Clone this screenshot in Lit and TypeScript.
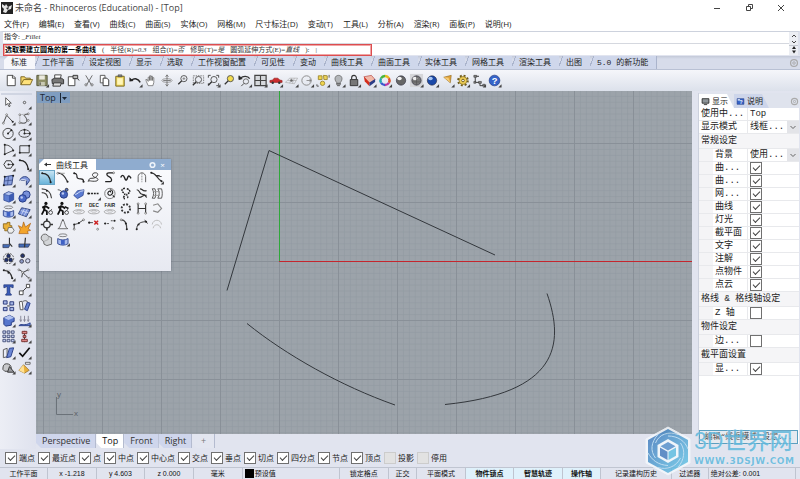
import { LitElement, html, css, svg, nothing, type SVGTemplateResult } from "lit";
import { customElement, property } from "lit/decorators.js";
import { classMap } from "lit/directives/class-map.js";
import { styleMap } from "lit/directives/style-map.js";

type Pic = SVGTemplateResult;

const flyout = svg`<path d="M15.500 12v3.500H12z" fill="#444" stroke="none"/>`;
const node = (x: number, y: number): Pic =>
  svg`<circle cx=${x} cy=${y} r="1" fill="#fff" stroke="#444" stroke-width=".6"/>`;
const dot = (x: number, y: number, c = "#222"): Pic =>
  svg`<circle cx=${x} cy=${y} r="1.1" fill=${c} stroke="none"/>`;
const ball = (c: string, hi: string): Pic => svg`
  <circle cx="8" cy="8" r="5" fill=${c} stroke="#223" stroke-width=".6"/>
  <ellipse cx="6.4" cy="5.8" rx="2.4" ry="1.8" fill=${hi} stroke="none"/>`;
const disc = (t: string): Pic => svg`
  <ellipse cx="8" cy="11.5" rx="6" ry="2.2" stroke="#999" stroke-width=".8"/>
  <ellipse cx="8" cy="11" rx="3" ry="1" stroke="#aaa" stroke-width=".7"/>
  <text x="8" y="6.5" font-size="5" font-weight="700" text-anchor="middle" font-family="Liberation Sans, sans-serif" fill="#222" stroke="none">${t}</text>`;
const walker = svg`
  <circle cx="7" cy="2.6" r="1.7" fill="#111" stroke="none"/>
  <path d="M6.5 4.5L5 9l3 2v4M5.4 9L2.5 14.5M6.5 5.5L3 7M7 5.5l3.5 2.5" stroke="#111" stroke-width="1.9"/>
  <circle cx="12" cy="12.3" r="2" stroke="#222" stroke-width=".8"/><path d="M9.5 12.5L13.5 8.5" stroke="#444" stroke-width=".8"/>`;
const glass = (x: number, y: number, fill = "none"): Pic => svg`
  <circle cx=${x} cy=${y} r="3.3" fill=${fill} stroke="#555"/>
  <path d="M${x - 2.4} ${y + 2.4}L${x - 6} ${y + 6}" stroke="#333" stroke-width="1.5"/>`;

const ICONS: Record<string, Pic> = {
  // standard toolbar
  new: svg`<path d="M4 2.5h6L12.500 5v8.500H4z" fill="#fff" stroke="#444"/><path d="M9.500 2.500V5.500h3" stroke="#444"/>`,
  open: svg`<path d="M2 12.500V4h4l1 1.500h5V7" fill="#f5d76a" stroke="#7b6420"/><path d="M2 12.500L5 7h9.500L12 12.500z" fill="#ffe27a" stroke="#7b6420"/>`,
  save: svg`<path d="M2.500 2.500h11v11h-11z" fill="#8d8e66" stroke="#55563c"/><path d="M5 2.500h6V7H5z" fill="#ebeadf" stroke="none"/><path d="M5 9.500h6v4H5z" fill="#c9c9b4" stroke="none"/><path d="M6 10v3" stroke="#333"/>`,
  print: svg`<path d="M5 6V2h7l-1 4" fill="#fff" stroke="#444"/><path d="M2 7l3-1.500h7L14.500 7v4.500h-12z" fill="#777" stroke="#333"/><path d="M4 10.500h8L11 14H3z" fill="#ddd" stroke="#333"/>`,
  props: svg`<path d="M3 4h7v9.500H3z" fill="#fff" stroke="#444"/><path d="M8 2.500h5v3.500H8z" fill="#bbb" stroke="#333"/><path d="M13 6l1.500 2" stroke="#333"/>`,
  cut: svg`<path d="M4.500 2.500L10.500 12.500M11.500 2.500L5.500 12.500" stroke="#666"/><circle cx="4.800" cy="12.600" r="1.200" stroke="#777"/><circle cx="11.200" cy="12.600" r="1.200" stroke="#777"/>`,
  copy: svg`<path d="M3.500 2.500h5v8h-5z" fill="#fff" stroke="#555"/><path d="M6.500 5.500h4L12.500 7.500v6h-6z" fill="#fff" stroke="#333"/>`,
  paste: svg`<path d="M3.500 3.500h9v10.500h-9z" fill="#ecd257" stroke="#77681f"/><path d="M5 5.500h6v7H5z" fill="#fff6b8" stroke="none"/><path d="M6 2h4v2H6z" fill="#888" stroke="#444" stroke-width=".7"/>`,
  undo: svg`<path d="M3.500 8C7 5 11 6 13 10" stroke="#222" stroke-width="1.600"/><path d="M1.500 9V4.500L6 8.500z" fill="#222" stroke="none"/>`,
  hand: svg`<path d="M5 13.500L3 9l-.500-2L4 7l1 2V4.500h1.500V8V3H8v5V3.500h1.500V8V5H11v5l-1 3.500z" fill="#fff" stroke="#666" stroke-width=".8"/>`,
  rotate: svg`<ellipse cx="8" cy="8" rx="5.500" ry="2" stroke="#999"/><path d="M8 2v12M6.500 4L8 2l1.500 2M6.500 12L8 14l1.500-2M4 8h8" stroke="#777"/>`,
  zoom: svg`${glass(9.5, 6)}<path d="M9.500 4.500v3M8 6h3" stroke="#777" stroke-width=".8"/>`,
  zoomWin: svg`<path d="M3 3h11v8H3z" stroke="#777" stroke-dasharray="1.500 1"/>${glass(8.5, 7)}`,
  zoomExt: svg`<path d="M2.500 5V2.500H5M11 2.500h2.500V5M13.500 11v2.500H11M2.500 11v2.500" stroke="#444"/>${glass(8.5, 7)}`,
  zoomSel: svg`${glass(9.5, 6, "#f3dc50")}`,
  undoView: svg`<path d="M3 5.500C6 3 11 3 13 6" stroke="#333" stroke-width="1.400"/><path d="M1.500 7V3L5 6z" fill="#222"/><circle cx="9" cy="9" r="2.800" stroke="#666"/><path d="M7 11l-3 3" stroke="#444"/>`,
  views: svg`<path d="M2 2.500h12v11H2z" fill="#d6d9dd" stroke="#444" stroke-width="1.300"/><path d="M8 2.500v11M2 8h12" stroke="#444" stroke-width="1.200"/>`,
  car: svg`<path d="M1.500 10V8l3-.500L6 5.500h4L12 7.500l2.500.500v2z" fill="#cc2d2d" stroke="#8d1717" stroke-width=".6"/><circle cx="4.500" cy="10.300" r="1.300" fill="#333" stroke="none"/><circle cx="11.500" cy="10.300" r="1.300" fill="#333" stroke="none"/>`,
  cplane: svg`<path d="M1.500 10L6 5.500h8.500L11 11.500zM4 8h9M8 5.500L6 11M11 5.500L9 11" stroke="#aaa" stroke-width=".7"/><circle cx="8" cy="8" r="1.300" fill="#666" stroke="none"/>`,
  radius: svg`<circle cx="7.500" cy="8" r="5" stroke="#888"/><path d="M7.500 8h5M10.500 6.500L12.500 8l-2 1.500" stroke="#777" stroke-width=".8"/>`,
  select: svg`<path d="M3 3h4v4H3z" fill="#f0d54d" stroke="#a08c35"/><path d="M8.500 2.500l4 .500v4H9z" fill="#eed45b" stroke="#a08c35"/><circle cx="7.500" cy="11" r="2.300" fill="#f0d54d" stroke="#a08c35"/><path d="M1.500 12v2h2M14.500 2v3" stroke="#555"/>`,
  bulb: svg`<path d="M6 10C3 7 4 2.500 8 2.500S13 7 10 10v2.500H6z" fill="#b4b7ba" stroke="#666" stroke-width=".8"/><path d="M6 11h4M6.500 13.500h3" stroke="#555"/>`,
  lock: svg`<path d="M5.500 7V5a2.500 2.500 0 015 0v2" stroke="#333" stroke-width="1.200"/><path d="M4 7h8v6.500H4z" fill="#777" stroke="#333"/>`,
  layer: svg`<path d="M2 4l8-1.500L14 7l-6 4z" fill="#f1b9a8" stroke="#a33" stroke-width=".6"/><path d="M2 4l6 6v4L3 9z" fill="#d52d1c" stroke="none"/><path d="M8 10l6-3.500v3L8 14z" fill="#2b3d86" stroke="none"/>`,
  wheel: svg`<g stroke-width="2.600"><path d="M8 3.200A4.800 4.800 0 0112.200 5.600" stroke="#e6b91e"/><path d="M12.200 5.600A4.800 4.800 0 0112.200 10.400" stroke="#e0522d"/><path d="M12.200 10.400A4.800 4.800 0 018 12.800" stroke="#b839a3"/><path d="M8 12.800A4.800 4.800 0 013.800 10.400" stroke="#3a58cf"/><path d="M3.800 10.400A4.800 4.800 0 013.800 5.600" stroke="#28a7b3"/><path d="M3.800 5.600A4.800 4.800 0 018 3.200" stroke="#49b53c"/></g>`,
  grey: ball("#666", "#f4f4f4"),
  greyBox: svg`<path d="M1 1h14v14H1z" fill="#d5d6d9" stroke="none"/>${ball("#777", "#eee")}<path d="M8 3v10M3.500 9.500h9" stroke="#555" stroke-width=".7"/>`,
  blue: ball("#1b49a8", "#a8c6f4"),
  cone: svg`<path d="M4 4.500L12 2.500l-1 8z" fill="#e0a33a" stroke="#87601a" stroke-width=".6"/><path d="M4 4.500l5 .500 2 5z" fill="#f6cd78" stroke="none"/>`,
  gear: svg`<circle cx="8" cy="8" r="5" stroke="#6d5a1c" stroke-width="2.400" stroke-dasharray="2 1.930"/><circle cx="8" cy="8" r="4.200" fill="#efcf57" stroke="#8b7426" stroke-width=".8"/><circle cx="8" cy="8" r="1.400" fill="#fff" stroke="#6d5a1c"/>`,
  history: svg`<path d="M4 4v6h5v3.500h4M4 3.500h4" stroke="#333"/><path d="M2.500 2.500h3v2h-3zM7.500 9h3v2h-3zM12 12h2.500v2H12zM2.500 9h2v2h-2z" fill="#888" stroke="#333" stroke-width=".6"/>`,
  help: svg`<circle cx="8" cy="8" r="5.700" fill="#3463c8" stroke="#1b3580" stroke-width=".7"/><text x="8" y="11.600" font-size="10" font-weight="700" text-anchor="middle" font-family="Liberation Sans, sans-serif" fill="#fff" stroke="none">?</text>`,

  // side toolbox
  arrow: svg`<path d="M5 3v8l2-1.800L8.500 12.500l1.300-.700L8.300 8.700H11z" fill="#fff" stroke="#333" stroke-width=".8"/>`,
  point: svg`<circle cx="8" cy="8" r="1.300" stroke="#555"/>`,
  polyline: svg`<path d="M2.500 13L6 4.500l6.500 7" stroke="#444"/>${node(6, 4)}${node(2.5, 13)}${dot(12.5, 11.5)}`,
  ctrlCurve: svg`<path d="M3.500 12.500C9 14 12 12 10 8S5 5 12 3" stroke="#333"/><path d="M3 4l9-1M3 4v8" stroke="#888" stroke-dasharray="1 1"/>${node(3, 4)}${node(12, 3)}${node(3, 12.5)}${node(12, 10)}`,
  circle: svg`<circle cx="7.500" cy="8" r="5.500" stroke="#444"/><path d="M7.500 8l3.500-3.500" stroke="#333"/>${dot(7.5, 8)}${dot(11, 4.5)}`,
  ellipse: svg`<ellipse cx="8" cy="8" rx="6" ry="4" stroke="#444"/><path d="M8 4v4h5" stroke="#666"/>${dot(8, 8)}${dot(8, 4)}${dot(13.5, 8)}`,
  arc: svg`<path d="M4 3v10M4 3c5 0 8 3 9 6L4 13" stroke="#444"/>${dot(4, 3)}${dot(4, 13)}${dot(13, 9)}`,
  rect: svg`<path d="M3 4h10v7.500H3z" stroke="#333"/>${dot(3, 11.5)}${dot(13, 4)}`,
  polygon: svg`<path d="M5.500 4h5L13 8l-2.500 4h-5L3 8z" stroke="#333"/><path d="M8 8h5" stroke="#666"/>${dot(8, 8)}${dot(13, 8)}`,
  fillet: svg`<path d="M3 3.500C8 3.500 11 6 12 13" stroke="#222" stroke-width="1.400"/>${dot(3, 3.5)}${dot(12, 13)}`,
  surface: svg`<path d="M4 4l9-1.500-1.500 10L3 13z" fill="#8ba0de" stroke="#30437f"/><path d="M8 3.500l-1 9M3.500 8.500l9-1" stroke="#30437f" stroke-width=".7"/>${dot(4, 4)}${dot(13, 3)}${dot(3, 13)}`,
  sweep: svg`<path d="M3 8C4 3 12 2 13.500 8L10 13V8z" fill="#7f95da" stroke="#30437f"/><path d="M3 8c2-1 5-1 7 0" stroke="#fff"/>`,
  box: svg`<path d="M3 5.500L8 3l5.500 1.500v7L8.500 14 3 12z" fill="#5e7dd0" stroke="#253b83" stroke-width=".7"/><path d="M3 5.500L8 3l5.500 1.500L8.500 7z" fill="#b5c6f3" stroke="#253b83" stroke-width=".5"/><path d="M8.500 7v7l5-2.500v-7z" fill="#3d5bb3" stroke="none"/>`,
  spheres: svg`<circle cx="10" cy="6" r="4" fill="#7890da" stroke="#253b83"/><circle cx="6" cy="10" r="4" fill="#4b69c5" stroke="#253b83"/><circle cx="5" cy="9" r="1.300" fill="#bccbf5" stroke="none"/>`,
  loft: svg`<path d="M2.500 7c3 2 8 2 11 0v5.500c-3 2-8 2-11 0z" fill="#a9bbec" stroke="#334a91"/><path d="M6 8.500h4v5H6z" fill="#3f61c4" stroke="none"/><ellipse cx="8" cy="3.500" rx="4.500" ry="1.500" stroke="#666" stroke-width=".8"/>`,
  mesh: svg`<path d="M5 4l9 2-4 7.500-8.500-3z" fill="#7890da" stroke="#30437f"/><path d="M8 5L4.500 11.500M11 5.500L7.500 12.500M4 7l8.500 2.500" stroke="#dfe6fb" stroke-width=".7"/>`,
  join: svg`<path d="M2.500 4h4V2.500h3V6h2v4H8v1.500H4V9H2.500z" fill="#e9b13b" stroke="#7d5a11" stroke-width=".8"/><path d="M8 8h4l2 3-2 3H8l-1-3z" fill="#eee" stroke="#555" stroke-width=".8"/>`,
  explode: svg`<path d="M2 14.500L3.500 10 1.500 6l4 2L7 2l2 5.500 5.500-4-2.500 6 2.500 1.500-3.500 1 1 2.500z" fill="#f3a52c" stroke="#a85a0c" stroke-width=".7"/>`,
  trim: svg`<path d="M2 10h8l-2 3.500H2z" fill="#446bb4" stroke="#223" stroke-width=".6"/><path d="M9 3v6.500M9 9l3 3.500" stroke="#333" stroke-width="1.200"/>`,
  split: svg`<path d="M2 9.500h12L12 13H2z" fill="#446bb4" stroke="#223" stroke-width=".6"/><path d="M9 3l-1 10" stroke="#333" stroke-width="1.300"/>`,
  group: svg`<circle cx="8" cy="8" r="5.500" stroke="#555" stroke-dasharray="2 1"/>${[[8, 5.3], [5.7, 9.5], [10.3, 9.5]].map(([x, y]) => svg`<circle cx=${x} cy=${y} r="2" fill="#233370" stroke="#111" stroke-width=".5"/>`)}`,
  ungroup: svg`<circle cx="6" cy="5" r="2" fill="#233370"/><circle cx="5" cy="11" r="2" fill="#8d9ac6" stroke="#445"/><circle cx="11.500" cy="10.500" r="2.300" fill="#d4daf0" stroke="#445"/>`,
  editPts: svg`<path d="M3 3.500c5 0 8 3 9 9" stroke="#333" stroke-width="1.300"/><path d="M3 3.500h8M12 12" stroke="#999" stroke-dasharray="1 1"/>${dot(3, 3.5)}${dot(8, 6)}${dot(12, 12)}`,
  ctrlPts: svg`<path d="M2 3c4 1 5 5 11 9M6 6l6-3M6 6l-1 5" stroke="#333"/>${node(2, 3)}${node(6, 6)}${node(12, 3)}${node(13, 12)}`,
  text: svg`<path d="M3 3h10v3h-1.500L11 5H9.500v7l1.500 1v1H5v-1l1.500-1V5H5L4.500 6H3z" fill="#3a5cbb" stroke="#1f3270" stroke-width=".7"/>`,
  move: svg`<path d="M2.500 9.500h4v4h-4zM10 2.500h3.500V6H10z" fill="#fff" stroke="#444"/><path d="M6.500 9.500L10 6" stroke="#333"/>`,
  copyObj: svg`<path d="M2.500 3h4v3.500h-4zM2.500 10h4v3.500h-4zM9.500 4h4v3.500h-4zM9.500 10h4v3.500h-4z" fill="#a6b7e6" stroke="#29397a"/><path d="M6.500 8.500h3" stroke="#333"/>`,
  rotateObj: svg`<path d="M2.500 4l3-.500 1 9h-3z" fill="#fff" stroke="#555"/><path d="M8 12l3-7.500 3 1-3 8z" fill="#6b86d5" stroke="#2a3f88"/><path d="M6.500 3.500c2-1 4-1 5 1" stroke="#555"/>`,
  boolean: svg`<path d="M3 5l6-2.500L14 5v4l-3 1v3L5 14l-2-2z" fill="#5676cd" stroke="#253b83"/><path d="M3 5l6-2.500L14 5 8 7.500z" fill="#b3c4f0" stroke="none"/>`,
  project: svg`<path d="M4 3v6M8 3v6M12 3v6" stroke="#889"/><path d="M3 7l1 2 1-2M7 7l1 2 1-2M11 7l1 2 1-2" stroke="#889"/><path d="M2 13.500c3-3 6 1 12-3v3z" fill="#6e89d6" stroke="#2a3f88"/>`,
  array: svg`${[2, 6.5, 11].map(x => [2, 6.5, 11].map(y => svg`<path d="M${x} ${y}h3v2.600h-3z" fill="#c7d1f0" stroke="#3a4671" stroke-width=".9"/>`))}`,
  align: svg`<path d="M8 2v12" stroke="#333"/><path d="M5.500 2.500h5v2.500h-5zM6.500 7h3v2h-3zM5 11h6v2.500H5z" fill="#d88" stroke="#733"/>`,
  shear: svg`<path d="M2.500 5l4-1.500v9l-4 1z" fill="#e9ecf6" stroke="#555"/><path d="M9 3.500l4.500-.500-3 9.500-4.500 1z" fill="#6b86d5" stroke="#2a3f88"/>`,
  check: svg`<path d="M2.500 8.500L6 12l7.500-9" stroke="#111" stroke-width="1.800"/>`,
  solids: svg`<path d="M2 10c0-4 1-6 4-6s5 2 5 5v3H4z" fill="#c8c9cc" stroke="#444"/><path d="M9 7l5 6H7z" fill="#9a9ba0" stroke="#333"/>`,
  pyramid: svg`<path d="M7 5l6 6-5 3-6-3z" fill="#e8b03c" stroke="#8b621a" stroke-width=".7"/><path d="M7 5l1 9-6-3z" fill="#ffe092" stroke="none"/><path d="M9 2.500h5v2H9z" fill="#fff" stroke="#444" stroke-width=".8"/>`,

  // curve palette
  blend: svg`<path d="M2.500 3.500c5-1 8 4 10.500 9" stroke="#333" stroke-width="1.200"/><path d="M5 3.500h5" stroke="#999"/>${node(2.5, 3.5)}${dot(13, 12.5)}`,
  adjBlend: svg`<path d="M3 3.500c3 0 3 2 3 4s2 2 4 2 3 1 3 3" stroke="#222" stroke-width="1.300"/>${dot(3, 3.5)}${dot(13, 12.5)}`,
  arcBlend: svg`<path d="M2.500 12c0-5 4-2 7-4s4-5 0-5-4 4 0 5 4 4-1 4-4-1-7 0" stroke="#333"/>`,
  match: svg`<path d="M12 3H7c-3 0-3 3 0 4s4 5 1 5.500H3" stroke="#222" stroke-width="1.300"/>${node(12, 3)}`,
  wave: svg`<path d="M2.500 8c1-3 3-3 4 0s2 4 3 1 2-4 4 0" stroke="#222" stroke-width="1.500"/>`,
  arch: svg`<path d="M4 13V7c0-2 2-4 4-4s4 2 4 4v6" stroke="#555"/><path d="M8 3v10" stroke="#888" stroke-dasharray="2 1"/>`,
  extend: svg`<path d="M2 3c5 0 5 5 11 9M7 6h4M8 6l5 1" stroke="#333" stroke-width="1.200"/>${dot(2, 3)}${dot(13, 12)}`,
  offset: svg`<path d="M2.500 3c6 0 10 4 10.500 10M2.500 7c4 0 6 2 6.500 6" stroke="#444" stroke-width="1.200"/>${dot(8, 5)}`,
  ballBlue: svg`<circle cx="9" cy="9" r="4" fill="#4765bd" stroke="#253b83"/><path d="M2.500 4c2 0 4 1 5 3" stroke="#555"/><circle cx="12" cy="4" r="1.500" fill="#5b78cf"/><circle cx="8" cy="8" r="1.300" fill="#bccbf5" stroke="none"/>`,
  patch: svg`<path d="M2.500 10l4-5 7-1-1 6-6 3.500z" fill="#5b7bd2" stroke="#253b83" stroke-width=".7"/><path d="M4 9c3 0 4-4 9-4" stroke="#dce4fa"/>`,
  dashes: svg`<path d="M2 8h12" stroke="#222" stroke-width="1.400" stroke-dasharray="2 1"/>${dot(2, 8)}`,
  spiral: svg`<circle cx="8" cy="8" r="5.500" stroke="#777"/><path d="M8 4c3 0 4 3 2 5S5 9 6 7s3-2 3 0M11 10l2 2" stroke="#222" stroke-width="1.200"/>`,
  section: svg`<path d="M7 2.500C3 2.500 3 6 6 7.500S3 13 7 13.500M9 3c4 1 4 4 1 5s2 4-1 5" stroke="#222" stroke-width="1.600" stroke-dasharray="2 .8"/>`,
  ribbons: svg`<path d="M2.500 4c4 0 2 5 6 5s3 3 5 3M4 12c5 1 4-3 9-2M6 3c3 0 2 3 7 2" stroke="#333" stroke-width="1.300"/>`,
  tube: svg`<path d="M3 3c2 3 2 7 0 10h3c1-3 1-7 0-10zM9 3c2 3 2 7 0 10h4c1-3 1-7 0-10z" stroke="#555"/><path d="M5 6h6M5 10h6" stroke="#999"/>`,
  walkA: walker,
  walkB: svg`${walker}<path d="M10 6l4 2" stroke="#111" stroke-width="1.500"/>`,
  fit: disc("FIT"),
  dec: disc("DEC"),
  fair: disc("FAIR"),
  ring: svg`<circle cx="8" cy="8" r="4.500" stroke="#333" stroke-width="2" stroke-dasharray="2 1.500"/>`,
  ladder: svg`<path d="M4 2.500v11M12 2.500v11M4 8h8" stroke="#333" stroke-width="1.200"/>${node(4, 3)}${node(4, 13)}${node(12, 3)}${node(12, 13)}`,
  pent: svg`<path d="M4 4.500l5-1.500 4 5-4 4-5-1.500" stroke="#888" stroke-width="1.200"/>`,
  target: svg`<circle cx="8" cy="8" r="3.500" stroke="#333" stroke-width="1.300"/><path d="M8 1.500v3M8 11.500v3M1.500 8h3M11.500 8h3" stroke="#333" stroke-width="1.800"/>`,
  bell: svg`<path d="M2.500 12.500C6 12 6 3.500 8 3.500s2 8.500 5.500 9M3 12.500h10" stroke="#666"/>${dot(8, 3.5, "#555")}`,
  insertPt: svg`<path d="M3 13V8l4-1 6-4" stroke="#444"/>${node(3, 13)}${dot(3, 8)}${dot(8, 6.5)}${node(13, 3)}`,
  removePt: svg`<path d="M2 6h5" stroke="#444"/>${dot(3, 6)}<path d="M8.500 4l4 4M12.500 4l-4 4" stroke="#cc2222" stroke-width="1.600"/>${node(12, 13)}`,
  kink: svg`<path d="M2 7h5M9 4h4" stroke="#444" stroke-dasharray="2 1"/>${dot(3, 7)}${dot(13, 4)}${node(11, 12)}`,
  segment: svg`<path d="M3 3c5 0 6 4 6 10" stroke="#444" stroke-width="1.200"/>${node(3, 3)}${dot(8, 7)}${dot(9, 13)}`,
  chord: svg`<path d="M2.500 13c0-5 3-8 10-8M11 3l3 4" stroke="#333"/>${dot(2.5, 13)}${dot(4.5, 8)}${dot(12.5, 5)}`,
  rainbow: svg`<path d="M3 8c1-6 9-6 10 0M4 12c1-5 7-5 8 0" stroke="#bbb"/>`,
  union: svg`<path d="M9.500 4.500A4 4 0 104.500 10L5 13l3 1.500 5-1.500V6z" fill="#d3d5d8" stroke="#666"/><path d="M9.500 5v3L5 10" stroke="#999" stroke-width=".7"/>`,

  monitor: svg`<path d="M2 3h12v8H2z" fill="#8e9599" stroke="#222" stroke-width="1.500"/><path d="M5 13.500h6" stroke="#222" stroke-width="1.500"/>`,
  book: svg`<path d="M2 3h12v10H2z" fill="#3463c8" stroke="#1b3580"/><path d="M3 4h4v2H3z" fill="#fff" stroke="none"/><text x="9" y="12" font-size="9" font-weight="700" text-anchor="middle" font-family="Liberation Sans, sans-serif" fill="#fff" stroke="none">?</text>`,
  cog: svg`<circle cx="8" cy="8" r="5.500" stroke="#aaa" stroke-width="2"/><circle cx="8" cy="8" r="2" stroke="#aaa" stroke-width="1.500"/>`,
};

@customElement("rh-icon")
class RhIcon extends LitElement {
  static styles = css`
    :host { display: block; width: 100%; height: 100%; }
    .pic { display: block; width: 100%; height: 100%; }
  `;
  @property() name = "";
  @property({ type: Boolean }) more = false;
  render() {
    return html`<svg class="pic" viewBox="0 0 16 16" fill="none" stroke="#333" stroke-width="1" aria-hidden="true">
      ${ICONS[this.name]}${this.more ? flyout : nothing}
    </svg>`;
  }
}

const MENUS = ["文件(F)", "编辑(E)", "查看(V)", "曲线(C)", "曲面(S)", "实体(O)", "网格(M)", "尺寸标注(D)", "变动(T)", "工具(L)", "分析(A)", "渲染(R)", "面板(P)", "说明(H)"];
const TABS = ["标准", "工作平面", "设定视图", "显示", "选取", "工作视窗配置", "可见性", "变动", "曲线工具", "曲面工具", "实体工具", "网格工具", "渲染工具", "出图", "5.0 的新功能"];
// A trailing + marks a tool that opens a flyout.
const MAIN_TOOLS = "new open save+ print props cut copy paste undo+ hand rotate zoom zoomWin zoomExt+ zoomSel undoView+ views+ car+ cplane+ radius+ select+ bulb+ lock+ layer+ wheel+ grey greyBox+ blue+ cone+ gear+ history+ help+".split(" ");
const SIDE_TOOLS = "arrow point+ polyline+ ctrlCurve+ circle+ ellipse+ arc+ rect+ polygon+ fillet+ surface+ sweep+ box+ spheres+ loft+ mesh+ join explode trim split group+ ungroup editPts+ ctrlPts+ text move+ copyObj rotateObj boolean+ project+ array+ align+ shear+ check+ solids+ pyramid+".split(" ");
const CURVE_TOOLS = "fillet blend adjBlend arcBlend match wave arch extend+ offset ballBlue patch dashes+ spiral section ribbons tube walkA walkB fit dec fair ring ladder pent target bell insertPt removePt kink segment chord rainbow union loft+".split(" ");
const SNAPS: [string, boolean][] = [["端点", true], ["最近点", true], ["点", true], ["中点", true], ["中心点", true], ["交点", true], ["垂点", true], ["切点", true], ["四分点", true], ["节点", true], ["顶点", true], ["投影", false], ["停用", false]];
const OPTIONS = [["半径", "(R)", "0.3"], ["组合", "(I)", "否"], ["修剪", "(T)", "是"], ["圆弧延伸方式", "(E)", "直线"]];
const STATUS: { text: string; size: number; kind?: string }[] = [
  { text: "工作平面", size: 48 }, { text: "x -1.218", size: 49 }, { text: "y 4.603", size: 48 }, { text: "z 0.000", size: 49 },
  { text: "毫米", size: 49 }, { text: "预设值", size: 96, kind: "layer" }, { text: "锁定格点", size: 49 }, { text: "正交", size: 28 },
  { text: "平面模式", size: 49 }, { text: "物件锁点", size: 48, kind: "on" }, { text: "智慧轨迹", size: 49, kind: "on" },
  { text: "操作轴", size: 38, kind: "on" }, { text: "记录建构历史", size: 71 }, { text: "过滤器", size: 37 }, { text: "绝对公差: 0.001", size: 86, kind: "start" },
];
type Row = { label: string; kind: "section" | "check" | "select" | "text"; value?: string; on?: boolean; top?: boolean };
const ROWS: Row[] = [
  { label: "使用中...", kind: "text", value: "Top", top: true },
  { label: "显示模式", kind: "select", value: "线框...", top: true },
  { label: "常规设定", kind: "section" },
  { label: "背景", kind: "select", value: "使用..." },
  ...["曲...", "曲...", "网...", "曲线", "灯光", "截平面", "文字", "注解", "点物件", "点云"].map((label): Row => ({ label, kind: "check", on: true })),
  { label: "格线 & 格线轴设定", kind: "section" },
  { label: "Z 轴", kind: "check", on: false },
  { label: "物件设定", kind: "section" },
  { label: "边...", kind: "check", on: false },
  { label: "截平面设置", kind: "section" },
  { label: "显...", kind: "check", on: true },
];

const tool = (t: string, i: number, pressed = -1) => html`
  <button class=${classMap({ tool: true, pressed: i === pressed })} aria-label=${t.replace("+", "")}>
    <rh-icon name=${t.replace("+", "")} ?more=${t.endsWith("+")}></rh-icon>
  </button>`;

@customElement("app-root")
class AppRoot extends LitElement {
  static styles = css`
    :host {
      display: flex; flex-direction: column; position: relative; min-height: 100vh; overflow: hidden;
      background: #e1e4ef; color: #222;
      font: 8px/12px "Open Sans", "Noto Sans CJK SC", sans-serif;
    }
    *, *::before { box-sizing: border-box; }
    button, input, select { font: inherit; color: inherit; margin: 0; padding: 0; border: 0; background: none; border-radius: 0; }
    button { white-space: nowrap; }

    .title { display: flex; align-items: center; height: 16px; background: #fff; padding: 0 14px 0 1px; }
    .app-icon { width: 12px; height: 12px; margin-right: 2px; }
    .title-text { flex: 1; color: #444; font-size: 9px; }
    .win { display: flex; gap: 22px; }
    .win button { width: 10px; height: 12px; }
    .win svg { display: block; }
    .menu { display: flex; gap: 10px; height: 15px; padding: 0 4px; background: #fff; align-items: center; }

    .command { display: flex; background: #fff; border-top: 1px solid #cdd2dd; border-left: 3px solid #dde1ec; border-right: 2px solid #dde1ec; font: 7px/8px "Liberation Serif", "Noto Sans CJK SC", serif; }
    .lines { flex: 1; }
    .history { height: 11px; padding: 1px 1px; }
    .entry { border-top: 1px solid #d5d8df; height: 12px; }
    .prompt { display: flex; align-items: center; gap: 6px; width: 47%; height: 12px; border: 1px solid #dc4d50; outline: 1px solid #f0a5a5; outline-offset: -2px; white-space: nowrap; color: #333; padding-left: 1px; }
    .prompt b { color: #000; }
    .caret { flex: 1; min-width: 0; height: 8px; }
    .scroll { width: 9px; background: #eceef3; display: flex; }

    .tabs { display: flex; height: 14px; margin-top: 1px; background: linear-gradient(#c3c9d8, #d7dcea 3px); border-bottom: 1px solid #b9c1d4; padding-left: 4px; }
    .tab { height: 13px; padding: 0 8px 0 7px; background: linear-gradient(110deg, transparent 3px, #aab4cc 3px, #aab4cc 4px, #cfd7eb 4px); font: 8px/13px "Liberation Mono", "Noto Sans CJK SC", monospace; }
    .tab.active { background: #f6f7fb; clip-path: polygon(4px 0, 100% 0, 100% 100%, 0 100%, 0 4px); }
    .tab-cog { width: 10px; height: 10px; margin: 2px 1px 0 auto; }
    .tab-end { border-right: 1px solid #aab4cc; }
    .tools { display: flex; height: 21px; background: linear-gradient(#f5f6fa, #dce1eb); padding: 0 3px; align-items: center; }
    .tool { display: block; width: 16px; height: 16px; min-width: 0; }
    .tools .tool { height: 15px; }
    .tools .tool:nth-child(5n + 2), .tools .tool:nth-child(5n + 4) { width: 15px; }

    .middle { flex: 1; display: flex; min-height: 0; }
    .side { width: 36px; padding: 2px 4px 0 1px; background: linear-gradient(90deg, #eceef5, #dfe2ee); }
    .side::before { content: ""; display: block; height: 2px; background: #d0d5e2; }
    .toolbox { display: grid; grid-template-columns: 1fr 1fr; grid-template-rows: repeat(4, 16px 15px 16px 15px 16px); }
    .toolbox .tool { width: 15px; height: 15px; }
    .center { flex: 1; display: flex; flex-direction: column; min-width: 0; }
    .viewport { position: relative; flex: 1; overflow: hidden; background: #9ca3aa; }
    .scene { position: absolute; inset: 0; width: 100%; height: 100%; }
    .axis-y { fill: #2fa83a; stroke: none; }
    .axis-x { fill: #c4262e; stroke: none; }
    .view-name { position: absolute; left: 1px; top: 1px; height: 11px; padding: 0 3px; background: #7f9dc0; font: 9px/11px "Open Sans", sans-serif; color: #1c2836; display: flex; gap: 4px; align-items: center; }
    .triad { position: absolute; left: 14px; bottom: 14px; }

    .palette { position: absolute; left: 3px; top: 68px; width: 132px; height: 112px; background: linear-gradient(#fbfcfe, #e7e9f1); box-shadow: 0 0 2px #67717e; }
    .palette-head { display: flex; height: 11px; background: #8faccf; align-items: center; padding-right: 5px; gap: 3px; color: #fff; }
    .palette-name { display: flex; align-items: center; gap: 5px; width: 57px; height: 11px; margin-right: auto; padding-left: 5px; background: #fff; color: #222; clip-path: polygon(5px 0, 100% 0, 100% 100%, 0 100%, 0 5px); line-height: 11px; }
    .palette-head button { width: 7px; height: 8px; line-height: 8px; }
    .palette-tools { display: grid; grid-template-columns: repeat(8, 1fr); grid-template-rows: 16px 15px 16px 15px 16px; padding-right: 6px; }
    .palette-tools .tool { width: 100%; height: 15px; }
    .pressed { background: linear-gradient(#cfe8f5, #62b0d8); outline: 1px solid #6aa5c6; outline-offset: -1px; }

    .views { display: flex; height: 15px; font-size: 9px; }
    .view { height: 14px; padding: 0 5px 0 6px; background: #cfd6ec; border-right: 1px solid #b4bbcf; line-height: 14px; color: #333; clip-path: polygon(0 0, 100% 0, 100% 100%, 5px 100%, 0 9px); }
    .view.active { background: #fff; color: #111; }
    .view.add { width: 23px; background: #e3e6f0; color: #777; }

    .panel { width: 101px; margin: 2px 1px 5px 6px; display: flex; flex-direction: column; font: 9px/13px "Liberation Mono", "Noto Sans CJK SC", monospace; border-left: 1px solid #ccd1dd; background: #fff; }
    .panel-tabs { display: flex; height: 15px; background: #dfe3ed; padding-top: 1px; align-items: center; }
    .panel-tab { display: flex; align-items: center; gap: 2px; height: 14px; padding: 0 6px 0 2px; background: #cdd5ea; font: 8px/14px "Noto Sans CJK SC", sans-serif; clip-path: polygon(0 0, 80% 0, 100% 100%, 0 100%); }
    .panel-tab.active { background: #fff; }
    .panel-tab rh-icon { width: 9px; height: 9px; }
    .panel-cog { width: 9px; height: 9px; margin-left: auto; }
    .row { display: grid; grid-template-columns: 14px 34px 1fr; height: 13px; border-bottom: 1px solid #e8e9ec; white-space: nowrap; }
    .row.top { grid-template-columns: 48px 1fr; }
    .row.section { display: block; height: 15px; line-height: 14px; background: #f5f5f7; padding-left: 2px; }
    .row .gutter { background: #f4f4f6; }
    .row label, .row .name { padding-left: 2px; line-height: 12px; overflow: visible; }
    .value { display: flex; border-left: 1px solid #e8e9ec; padding-left: 2px; line-height: 12px; align-items: center; }
    .value select { appearance: none; width: 34px; height: 12px; line-height: 12px; text-overflow: clip; }
    .chev { margin-left: auto; background: #e3e4e8; }
    .fill { flex: 1; background: #fff; }
    .edit { border: 1px solid #5a9fc0; height: 14px; background: #e6eaf0; margin-right: 1px; text-align: center; color: #444; font-size: 8px; line-height: 12px; overflow: hidden; }

    input[type="checkbox"] { appearance: none; display: grid; place-items: center; width: 12px; height: 12px; background: #fff; border: 1px solid #707070; flex: none; }
    input[type="checkbox"]:checked::before { content: ""; width: 7px; height: 4px; border: solid #444; border-width: 0 0 1px 1px; transform: rotate(-45deg); margin-bottom: 2px; }
    .snaps { display: flex; gap: 3px; height: 18px; padding-left: 5px; align-items: center; }
    .snap { display: flex; gap: 2px; align-items: center; white-space: nowrap; }
    .snap input.off { background: #e2e2e2; border-color: #ccc; }

    .status { display: flex; height: 12px; border-top: 1px solid #c0c5d1; padding-right: 4px; font: 7px/11px "Liberation Sans", "Noto Sans CJK SC", sans-serif; color: #111; }
    .cell { display: flex; align-items: center; justify-content: center; border-right: 1px solid #bfc4d0; min-width: 0; white-space: nowrap; height: 11px; }
    .cell.on { background: #dff1fb; font-weight: 700; }
    .cell.layer, .cell.start { justify-content: flex-start; padding-left: 2px; gap: 1px; }
    .swatch { width: 9px; height: 9px; background: #000; }

    .mark { position: absolute; right: 6px; bottom: 3px; display: flex; align-items: flex-start; gap: 3px; color: #62b8dc; pointer-events: none; opacity: 0.85; }
    .mark-words { width: 100px; text-shadow: 0 0 1px #fff; }
    .mark-name { font: 500 23px/30px "Liberation Sans", "Noto Sans CJK SC", sans-serif; white-space: nowrap; }
    .mark-url { font: 700 9px/10px "DejaVu Sans", sans-serif; white-space: nowrap; display: flex; justify-content: space-between; }
  `;

  private chevron = html`<svg class="chev" width="12" height="12" fill="none" stroke="#666" aria-hidden="true"><path d="M3.500 5L6 7.500 8.500 5"/></svg>`;

  private row(r: Row, i: number) {
    if (r.kind === "section") return html`<div class="row section">${r.label}</div>`;
    const id = `p${i}`;
    const name = r.kind === "text" ? html`<span class="name">${r.label}</span>` : html`<label for=${id}>${r.label}</label>`;
    const value =
      r.kind === "check" ? html`<input type="checkbox" id=${id} .checked=${!!r.on} />`
      : r.kind === "select" ? html`<select id=${id}><option>${r.value}</option></select>${this.chevron}`
      : r.value;
    return html`<div class=${classMap({ row: true, top: !!r.top })}>
      ${r.top ? nothing : html`<span class="gutter"></span>`}${name}<div class="value">${value}</div>
    </div>`;
  }

  private scene() {
    return html`<svg class="scene" fill="none" stroke="#33373c" aria-hidden="true">
      <defs>
        <pattern id="grid" x="7" y="52" width="59" height="59" patternUnits="userSpaceOnUse">
          ${[1, 2, 3, 4, 5, 6, 7, 8, 9].map(n => svg`<path d="M${n * 5.9 + 0.5} 0V59M0 ${n * 5.9 + 0.5}H59" stroke="#9199a1" stroke-width=".6"/>`)}
          <path d="M.5 0V59M0 .5H59" stroke="#899098"/>
        </pattern>
      </defs>
      <rect width="100%" height="100%" fill="url(#grid)" stroke="none"/>
      <rect class="axis-y" x="243" y="0" width="1" height="170"></rect>
      <rect class="axis-x" x="243" y="170" width="100%" height="1"></rect>
      <path d="M191 199.500L233 59.500L459 164"/>
      <path d="M211 232.500C250 264 305 295 359 314"/>
      <path d="M511 202.500C529 254 522 302 409 313.500"/>
    </svg>`;
  }

  render() {
    return html`
      <header class="title">
        <svg class="app-icon" viewBox="0 0 12 12"><path d="M0 0h12v12H0z" fill="#222"/><path d="M1 2l3 2 1-2 2 3 4-2-1 4-3 1-2 3-3-1 1-3-2-2z" fill="#e6e6e6"/><path d="M5 6l3-1-1 3z" fill="#333"/></svg>
        <span class="title-text">未命名 - Rhinoceros (Educational) - [Top]</span>
        <div class="win">
          <button aria-label="最小化"><svg width="10" height="12" stroke="#444"><path d="M2 6.500h6"/></svg></button>
          <button aria-label="还原"><svg width="10" height="12" fill="none" stroke="#444"><path d="M2.500 4.500h4v4h-4zM4.500 4.500v-2h4v4h-2"/></svg></button>
          <button aria-label="关闭"><svg width="10" height="12" stroke="#444"><path d="M2 3l6 6M8 3L2 9"/></svg></button>
        </div>
      </header>
      <nav class="menu">${MENUS.map(m => html`<button>${m}</button>`)}</nav>

      <section class="command">
        <div class="lines">
          <div class="history">指令: <i>_Fillet</i></div>
          <div class="entry">
            <div class="prompt">
              <b>选取要建立圆角的第一条曲线</b><span>(</span>
              ${OPTIONS.map(([n, k, v]) => html`<span>${n}${k}=<i>${v}</i></span>`)}
              <span>):</span><input class="caret" aria-label="指令" value="|" />
            </div>
          </div>
        </div>
        <svg class="scroll" width="9" height="23" fill="none" stroke="#444" aria-hidden="true">
          <path d="M3 5l2-2 2 2M3 9l2 2 2-2"/><path d="M0 13.500h9" stroke="#c4c8d0"/><path d="M3 17l2-3 2 3zM3 18.500l2 3 2-3z" fill="#222" stroke="none"/>
        </svg>
      </section>

      <nav class="tabs">
        ${TABS.map((t, i) => html`<button class=${classMap({ tab: true, active: i === 0, "tab-end": i === TABS.length - 1 })}>${t}</button>`)}
        <rh-icon class="tab-cog" name="cog"></rh-icon>
      </nav>
      <div class="tools">${MAIN_TOOLS.map((t, i) => tool(t, i))}</div>

      <main class="middle">
        <aside class="side"><div class="toolbox">${SIDE_TOOLS.map((t, i) => tool(t, i))}</div></aside>
        <div class="center">
          <div class="viewport">
            ${this.scene()}
            <button class="view-name">Top <svg width="7" height="10"><path d="M.500 0v10" stroke="#1c2836"/><path d="M2 4h5L4.500 7z" fill="#1c2836"/></svg></button>
            <svg class="triad" width="34" height="30" fill="none" stroke="#6b7279">
              <path d="M6.500 7v17.500H23"/>
              <g font-family="Liberation Sans, sans-serif" font-size="8" fill="#5b6168" stroke="none"><text x="7" y="7">y</text><text x="24" y="26">x</text></g>
            </svg>
            <section class="palette">
              <div class="palette-head">
                <span class="palette-name"><svg width="7" height="7" stroke="#333"><path d="M1 3.500h6"/><path d="M0 3.500l3-2v4z" fill="#333" stroke="none"/></svg>曲线工具</span>
                <button aria-label="选项"><svg width="7" height="8" fill="none" stroke="#eef3fa"><circle cx="3.500" cy="4" r="2.300" stroke-width="1.600"/></svg></button>
                <button aria-label="关闭">×</button>
              </div>
              <div class="palette-tools">${CURVE_TOOLS.map((t, i) => tool(t, i, 0))}</div>
            </section>
          </div>
          <nav class="views">
            ${["Perspective", "Top", "Front", "Right"].map(v => html`<button class=${classMap({ view: true, active: v === "Top" })}>${v}</button>`)}
            <button class="view add">+</button>
          </nav>
        </div>
        <aside class="panel">
          <div class="panel-tabs">
            <button class="panel-tab active"><rh-icon name="monitor"></rh-icon>显示</button>
            <button class="panel-tab"><rh-icon name="book"></rh-icon>说明</button>
            <rh-icon class="panel-cog" name="cog"></rh-icon>
          </div>
          ${ROWS.map((r, i) => this.row(r, i))}
          <div class="fill"></div>
          <button class="edit">编辑“线框模式”设定...</button>
        </aside>
      </main>

      <div class="snaps">
        ${SNAPS.map(([n, on], i) => html`<label class="snap"><input type="checkbox" class=${i > 10 ? "off" : ""} .checked=${on} />${n}</label>`)}
      </div>
      <footer class="status">
        ${STATUS.map(s => html`<div class="cell ${s.kind ?? ""}" style=${styleMap({ flex: `${s.size} 1 0` })}>
          ${s.kind === "layer" ? html`<span class="swatch"></span>` : nothing}${s.text}
        </div>`)}
      </footer>

      <div class="mark">
        <svg width="46" height="50" viewBox="0 0 46 50" aria-hidden="true">
          <defs><linearGradient id="hex" x1="0" y1="0" x2="1" y2="1"><stop offset="0" stop-color="#4377bb"/><stop offset="1" stop-color="#6ccdea"/></linearGradient></defs>
          <path d="M23 1L45 13v24L23 49 1 37V13z" fill="#f4f8fc" stroke="#f4f8fc" stroke-linejoin="round"/>
          <path d="M23 3L43 14v22L23 47 3 36V14z" fill="url(#hex)"/>
          <path d="M33 8.500C24 5 14 8 10.500 17M43 23C40 15 33 10 23 10M33 41.500C39 34 41 25 35.500 17M13 41.500C22 44 31 41 35.500 32M3 27C7 34 13 39 23 39.500M13 8.500C6 16 5 25 10.500 32" fill="none" stroke="#b9dcf2" stroke-width="1"/>
          <path d="M23 13l10.500 6v12L23 37l-10.500-6V19z" fill="#f2f8fc"/>
          <path d="M23 16l7.500 4.300L23 24.500l-7.500-4.200z" fill="#5a93cc"/><path d="M15 21.500l7.500 4.200V34L15 29.700z" fill="#4b80c0"/><path d="M31 21.500l-7.500 4.200V34l7.500-4.300z" fill="#63bfe2"/>
        </svg>
        <div class="mark-words">
          <div class="mark-name">3D世界网</div>
          <div class="mark-url">${[..."WWW.3DSJW.COM"].map(c => html`<span>${c}</span>`)}</div>
        </div>
      </div>
    `;
  }
}
